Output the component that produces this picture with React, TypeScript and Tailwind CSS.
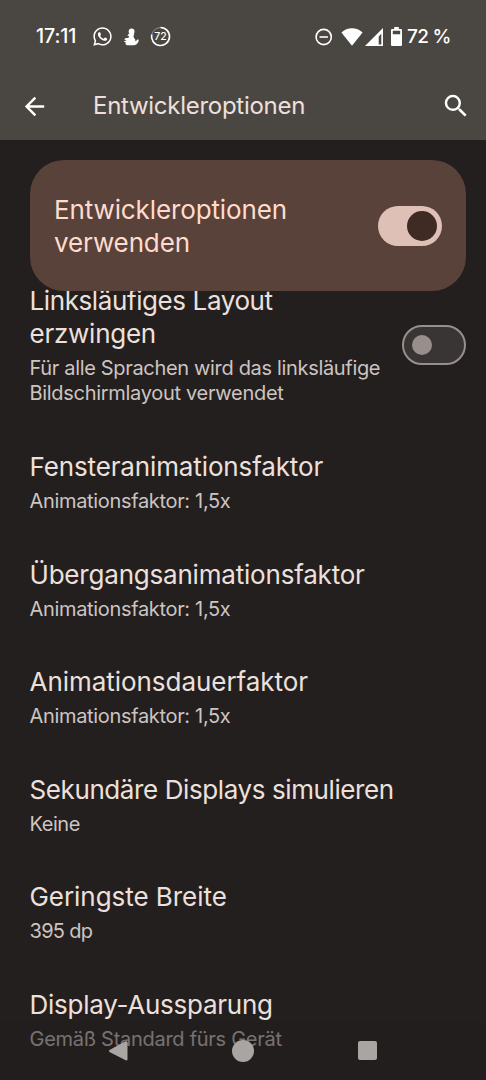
import * as React from 'react';
import { FaWhatsapp } from 'react-icons/fa';
import { MdArrowBack, MdSearch } from 'react-icons/md';

type Option = {
    title: string
    summary: string
    titleClass: string
    summaryClass: string
};

const options: Option[] = [
    { title: 'Fensteranimationsfaktor', summary: 'Animationsfaktor: 1,5x', titleClass: 'tracking-[-0.13px]', summaryClass: 'tracking-[-0.33px]' },
    { title: 'Übergangsanimationsfaktor', summary: 'Animationsfaktor: 1,5x', titleClass: 'tracking-[-0.2px]', summaryClass: 'tracking-[-0.33px]' },
    { title: 'Animationsdauerfaktor', summary: 'Animationsfaktor: 1,5x', titleClass: 'tracking-[-0.04px]', summaryClass: 'tracking-[-0.33px]' },
    { title: 'Sekundäre Displays simulieren', summary: 'Keine', titleClass: 'tracking-[-0.4px]', summaryClass: 'tracking-[-0.45px]' },
    { title: 'Geringste Breite', summary: '395 dp', titleClass: 'tracking-[-0.05px]', summaryClass: 'tracking-[-0.7px]' },
    { title: 'Display-Aussparung', summary: 'Gemäß Standard fürs Gerät', titleClass: 'tracking-[-0.26px]', summaryClass: 'tracking-[-0.28px]' },
];

const StatusBar = () => (
    <div className="flex h-[73px] items-center pl-9 pr-9 text-white">
        <span className="w-[41px] whitespace-nowrap text-[19.5px] font-medium leading-none tracking-[-0.1px]">17:11</span>
        <FaWhatsapp className="ml-[15px] h-[21px] w-[21px]" />
        {/* Seated figure */}
        <svg className="ml-[10px] h-[18px] w-4" viewBox="0 0 16 18" fill="currentColor">
            <circle cx="8.6" cy="3.4" r="2.9" />
            <path d="M6 5.600 4.300 7.700l1.900.4-.9 1.800-2.700.2-1.400 1.300 2.400.9-3 1.300 2.300.9-.6 1.500 1.700 1.200h7.300c3-.6 4.200-2.900 4.500-5.300l-1-.7-2.400 2.300c.2-1.700-.6-3-1.600-3.700l-.3-1.800.9-2.200z" />
        </svg>
        <svg className="ml-[11px] h-[21px] w-[21px]" viewBox="0 0 21 21" fill="none">
            <circle cx="10.5" cy="10.5" r="9" stroke="#8f8a87" strokeWidth="1" />
            <path d="M10.5 1.5a9 9 0 1 1-8.800 7.200" stroke="currentColor" strokeWidth="1.6" />
            <text x="10.5" y="14.4" textAnchor="middle" fontSize="10.5" fontWeight="500" fill="currentColor">72</text>
        </svg>
        <div className="ml-auto flex items-center">
            <svg className="h-[18px] w-[18px]" viewBox="0 0 18 18" fill="none" stroke="currentColor" strokeWidth="1.6">
                <circle cx="8.7" cy="9" r="7.6" />
                <path d="M4.5 9h8.400" />
            </svg>
            <svg className="ml-2 h-[18px] w-[22px]" viewBox="0 0 22 18" fill="currentColor">
                <path d="M11 17.800.4 4.600C3.300 1.800 7 .3 11 .3s7.700 1.500 10.600 4.300z" />
            </svg>
            <svg className="ml-0.5 h-[18px] w-[18px]" viewBox="0 0 18 18" fill="currentColor">
                <path fillRule="evenodd" d="M18 0v18H0zM16.300 5.800l-2.600 2.600v8h2.600z" />
            </svg>
            <svg className="ml-2 h-[19px] w-[11px]" viewBox="0 0 11 19" fill="currentColor">
                <path fillRule="evenodd" d="M3.200 0h4.600v2H10a1 1 0 0 1 1 1v15a1 1 0 0 1-1 1H1a1 1 0 0 1-1-1V3a1 1 0 0 1 1-1h2.200zM1.800 3.800v3.400h7.400V3.800z" />
            </svg>
            <span className="ml-[5px] w-[43px] whitespace-nowrap text-[19px] font-medium leading-none tracking-[-0.7px]">72 %</span>
        </div>
    </div>
);

const AppBar = () => (
    <div className="flex h-[66px] items-center pl-5 pr-[15px]">
        <MdArrowBack className="h-[29px] w-[29px] text-white" />
        <h1 className="ml-[44px] whitespace-nowrap text-[24px] leading-8 tracking-[-0.28px] text-[#ede0dc]">Entwickleroptionen</h1>
        <MdSearch className="-mt-px ml-auto h-[30px] w-[30px] text-white" />
    </div>
);

const Toggle = ({ checked }: { checked: boolean }) => {
    if (checked) {
        return (
            <div role="switch" aria-checked="true" className="flex h-10 w-16 shrink-0 items-center justify-end rounded-full bg-[#dfc0b6] pr-[5px]">
                <div className="h-[30px] w-[30px] rounded-full bg-[#3f2a24]" />
            </div>
        );
    }

    return (
        <div role="switch" aria-checked="false" className="flex h-10 w-16 shrink-0 items-center rounded-full border-2 border-[#988f8d] bg-[#393534] pl-2">
            <div className="h-5 w-5 rounded-full bg-[#988f8d]" />
        </div>
    );
};

const OptionRow = ({ title, summary, titleClass, summaryClass }: Option) => (
    <li className="flex h-[107.6px] flex-col items-start">
        <span className={`whitespace-nowrap text-[26px] leading-[33px] text-[#ede0dc] ${titleClass}`}>{title}</span>
        <span className={`mt-1.5 whitespace-nowrap text-[20px] leading-[25px] text-[#cdc4c1] ${summaryClass}`}>{summary}</span>
    </li>
);

const NavigationBar = () => (
    <nav className="absolute inset-x-0 bottom-0 flex h-[59px] items-center bg-[#211e1d]/50 text-[#a8a5a3]">
        <svg className="ml-[108px] h-[22px] w-5" viewBox="0 0 20 22" fill="currentColor">
            <path d="M18 1.200c1 0 1.500.5 1.500 1.500v16.600c0 1-.9 1.500-1.800 1L1.500 12q-1.200-1 0-2L17 1.500z" />
        </svg>
        <div className="ml-[104px] h-[22px] w-[22px] rounded-full bg-[#a8a5a3]" />
        <div className="ml-[104px] h-[19px] w-[19px] rounded-xs bg-[#a8a5a3]" />
    </nav>
);

export default function App() {
    return (
        <div className="relative flex h-[1080px] w-[486px] flex-col overflow-hidden bg-[#231f1e] font-['Inter',sans-serif]">
            <header className="h-[140px] shrink-0 bg-[#4a4642]">
                <StatusBar />
                <AppBar />
            </header>

            <main className="flex flex-col pt-5">
                <section className="z-10 ml-[30px] mr-5 flex h-[131px] shrink-0 items-center justify-between rounded-[34px] bg-[#594239] pl-6 pr-6">
                    <h2 className="text-[26px] leading-[33px] tracking-[-0.12px] text-[#ffdbcf]">
                        Entwickleroptionen<br />verwenden
                    </h2>
                    <Toggle checked={true} />
                </section>

                <ul className="-mt-[7px] pl-[29.5px] pr-5">
                    <li className="flex h-[166px] items-start justify-between">
                        <div className="flex flex-col items-start whitespace-nowrap">
                            <span className="text-[26px] leading-[33px] tracking-[-0.4px] text-[#ede0dc]">Linksläufiges Layout</span>
                            <span className="text-[26px] leading-[33px] tracking-[-0.25px] text-[#ede0dc]">erzwingen</span>
                            <span className="mt-1.5 text-[20px] leading-[25px] tracking-[-0.33px] text-[#cdc4c1]">Für alle Sprachen wird das linksläufige</span>
                            <span className="text-[20px] leading-[25px] tracking-[-0.3px] text-[#cdc4c1]">Bildschirmlayout verwendet</span>
                        </div>
                        <div className="mt-[41px]">
                            <Toggle checked={false} />
                        </div>
                    </li>
                    {options.map((option) => (
                        <OptionRow key={option.title} {...option} />
                    ))}
                </ul>
            </main>

            <NavigationBar />
        </div>
    );
}
